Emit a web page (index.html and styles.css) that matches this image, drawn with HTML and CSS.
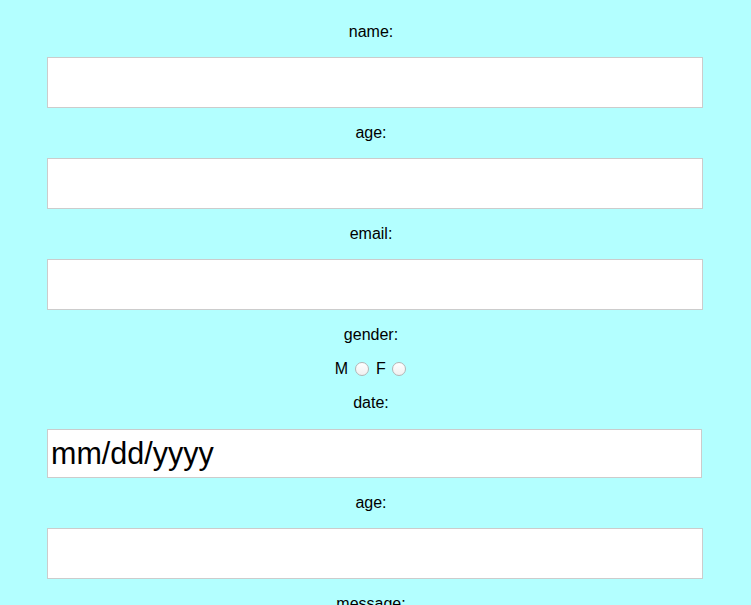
FILE: index.html
```html
<!DOCTYPE html>
<html>
<head>
<meta charset="utf-8">
<title>Form</title>
<link rel="stylesheet" href="styles.css">
</head>
<body>
<form class="form">
  <label class="label">name:</label>
  <input class="field" type="text">
  <label class="label">age:</label>
  <input class="field" type="text">
  <label class="label">email:</label>
  <input class="field" type="text">
  <label class="label">gender:</label>
  <div class="radios">M <input class="radio" type="radio" name="g"> F <input class="radio" type="radio" name="g"></div>
  <label class="label label-loose">date:</label>
  <input class="field field-date" type="text" placeholder="mm/dd/yyyy">
  <label class="label">age:</label>
  <input class="field" type="text">
  <label class="label">message:</label>
</form>
</body>
</html>
```
FILE: styles.css
```css
html, body {
  margin: 0;
  padding: 0;
  background: #b3ffff;
}
body {
  font-family: "Liberation Sans", Arial, sans-serif;
  font-size: 16px;
  color: #000;
}
.form {
  width: 656px;
  margin: 0 auto 0 47px;
  padding-top: 23px;
  display: flex;
  flex-direction: column;
}
.label {
  display: block;
  text-align: center;
  line-height: 18px;
  height: 18px;
  padding-right: 8px;
  margin-bottom: 16px;
}
.label-loose {
  margin-bottom: 17px;
}
.field {
  box-sizing: border-box;
  width: 656px;
  height: 51px;
  margin: 0 0 16px;
  border: 1px solid #cccccc;
  background: #fff;
  padding: 0 3px;
  outline: none;
  font-family: "Liberation Sans", Arial, sans-serif;
}
.field-date {
  width: 655px;
  height: 49px;
  font-size: 30.5px;
}
.field-date::placeholder {
  color: #000;
  opacity: 1;
}
.radios {
  text-align: center;
  line-height: 18px;
  height: 18px;
  padding-right: 6px;
  margin-bottom: 16px;
}
.radio {
  appearance: none;
  -webkit-appearance: none;
  box-sizing: border-box;
  width: 14px;
  height: 14px;
  border-radius: 50%;
  border: 1px solid #b5b5b5;
  background: linear-gradient(#ffffff, #f0f0f0);
  margin: 0 3px 0 2px;
  vertical-align: -2px;
}
```
